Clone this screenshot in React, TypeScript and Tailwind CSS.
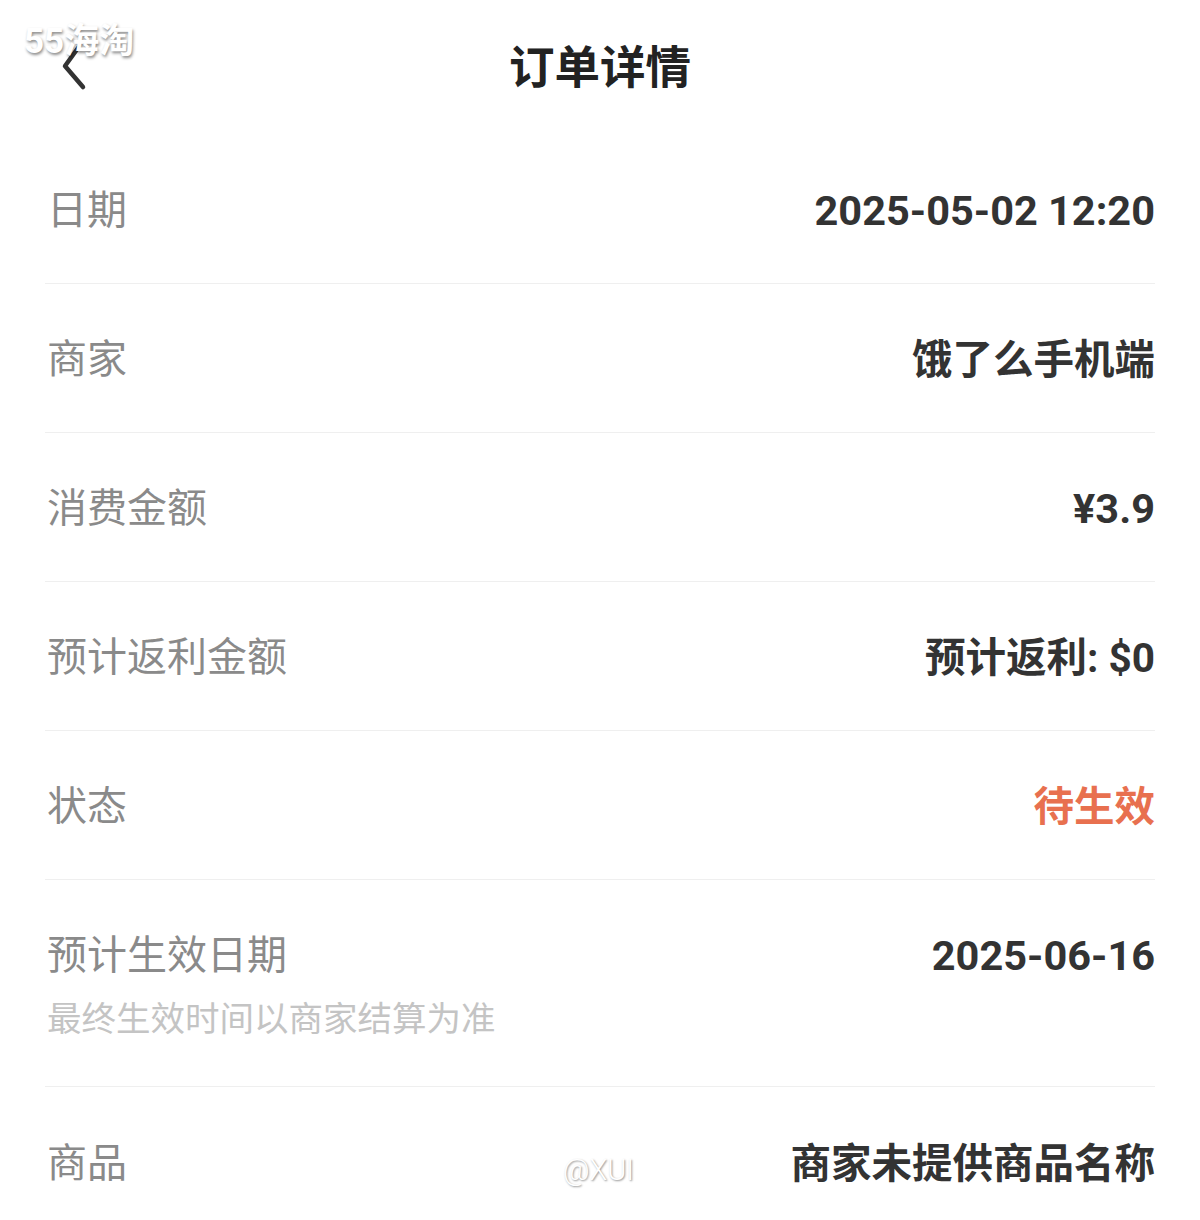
import React from "react";

const FONT = { fontFamily: 'Roboto, "Noto Sans CJK SC", "Noto Sans", sans-serif' };

type Row = { label: string; value: string; orange?: boolean; sub?: string; num?: boolean };

const rows: Row[] = [
  { label: "日期", value: "2025-05-02 12:20", num: true },
  { label: "商家", value: "饿了么手机端" },
  { label: "消费金额", value: "¥3.9", num: true },
  { label: "预计返利金额", value: "预计返利: $0" },
  { label: "状态", value: "待生效", orange: true },
  { label: "预计生效日期", value: "2025-06-16", sub: "最终生效时间以商家结算为准", num: true },
  { label: "商品", value: "商家未提供商品名称" },
];

export default function App() {
  return (
    <div className="relative w-[1200px] h-[1220px] overflow-hidden bg-white" style={FONT}>
      <header className="relative flex h-[135px] items-center justify-center">
        <button className="absolute left-[56px] top-[42px] flex h-[52px] w-[40px] items-center justify-center">
          <svg width="40" height="52" viewBox="0 0 40 52" fill="none">
            <path d="M22 6 L9 24 L27 45" stroke="#333" strokeWidth="4.5" strokeLinecap="round" strokeLinejoin="round" />
          </svg>
        </button>
        <h1 className="text-[45.5px] font-bold leading-none text-[#222] mt-[2px]">订单详情</h1>
      </header>
      <div className="px-[45px]">
        {rows.map((r, i) =>
          r.sub ? (
            <div key={i} className="flex items-start justify-between border-b border-[#efefef] pt-[54px] pb-[47px]">
              <div className="pl-[2px]">
                <div className="text-[40px] leading-[44px] text-[#8a8a8a]">{r.label}</div>
                <div className="mt-[21px] text-[34.5px] leading-[40px] text-[#c4c4c4]">{r.sub}</div>
              </div>
              <div className="text-[41.5px] font-bold leading-[44px] text-[#333]">{r.value}</div>
            </div>
          ) : (
            <div
              key={i}
              className={`flex h-[149px] items-center justify-between pt-[4px] ${i < rows.length - 1 ? "border-b border-[#efefef]" : ""}`}
            >
              <div className="pl-[2px] text-[40px] leading-[44px] text-[#8a8a8a]">{r.label}</div>
              <div
                className={`font-bold leading-[44px] ${r.num ? "text-[41.5px]" : "text-[40.5px]"} ${
                  r.orange ? "text-[#e8704f]" : "text-[#333]"
                }`}
              >
                {r.value}
              </div>
            </div>
          )
        )}
      </div>
      <div
        className="absolute left-[24px] top-[24px] text-[35px] font-bold leading-none text-white"
        style={{ textShadow: "1px 2px 3px rgba(0,0,0,0.45)" }}
      >
        55海淘
      </div>
      <div
        className="absolute left-[563px] top-[1156px] text-[29px] font-light leading-none text-white"
        style={{ textShadow: "1px 1px 2px rgba(0,0,0,0.45)" }}
      >
        @XUI
      </div>
    </div>
  );
}
